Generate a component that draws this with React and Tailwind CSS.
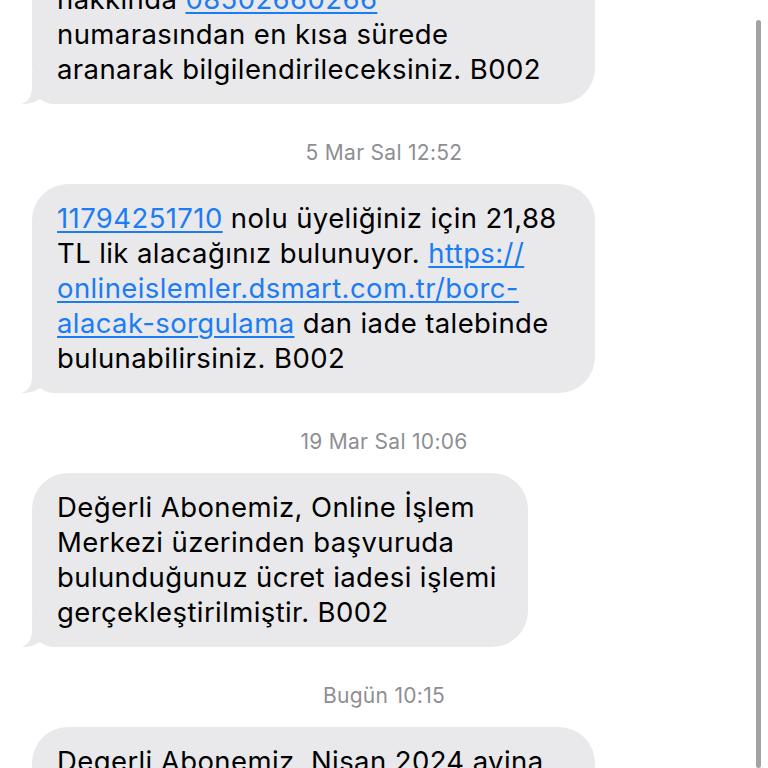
import React from "react";

const Link = ({ children }) => (
  <span className="text-[#1b7cf4] underline decoration-[1.5px] underline-offset-[3px]">{children}</span>
);

const Tail = () => (
  <svg
    className="absolute left-[-10px] bottom-0"
    width="46"
    height="32"
    viewBox="0 0 46 32"
  >
    <path
      d="M10 0 H46 V32 H34 C27 32 22 30 18 27 C14 30 7 32 0 32 C5 30 10 25 10 16 Z"
      fill="#e9e9eb"
    />
  </svg>
);

const Bubble = ({ width, lines }) => (
  <div className={`relative ml-[32px] ${width}`}>
    <Tail />
    <div className="relative rounded-[36px] bg-[#e9e9eb] pl-[25px] py-[17px] text-[27.5px] tracking-[0.4px] leading-[35px] text-black whitespace-nowrap">
      {lines.map((l, i) => (
        <div key={i}>{l}</div>
      ))}
    </div>
  </div>
);

const Stamp = ({ children }) => (
  <div className="mt-[38px] mb-[20px] text-center text-[21px] tracking-[0.3px] leading-[22px] font-normal text-[#8e8e93]">
    {children}
  </div>
);

export default function App() {
  return (
    <div
      className="relative h-[768px] w-[768px] overflow-hidden bg-white"
      style={{ fontFamily: "Inter, 'Noto Sans', sans-serif" }}
    >
      <div className="mt-[-35px] flex flex-col">
        <Bubble
          width="w-[563px]"
          lines={[
            <>hakkında <Link>08502660266</Link></>,
            <>numarasından en kısa sürede</>,
            <>aranarak bilgilendirileceksiniz. B002</>,
          ]}
        />
        <Stamp>5 Mar Sal 12:52</Stamp>
        <Bubble
          width="w-[563px]"
          lines={[
            <><Link>11794251710</Link> nolu üyeliğiniz için 21,88</>,
            <>TL lik alacağınız bulunuyor. <Link>https://</Link></>,
            <><Link>onlineislemler.dsmart.com.tr/borc-</Link></>,
            <><Link>alacak-sorgulama</Link> dan iade talebinde</>,
            <>bulunabilirsiniz. B002</>,
          ]}
        />
        <Stamp>19 Mar Sal 10:06</Stamp>
        <Bubble
          width="w-[496px]"
          lines={[
            <>Değerli Abonemiz, Online İşlem</>,
            <>Merkezi üzerinden başvuruda</>,
            <>bulunduğunuz ücret iadesi işlemi</>,
            <>gerçekleştirilmiştir. B002</>,
          ]}
        />
        <Stamp>Bugün 10:15</Stamp>
        <Bubble
          width="w-[563px]"
          lines={[
            <>Degerli Abonemiz, Nisan 2024 ayina</>,
            <>ait faturaniz olusturulmustur.</>,
          ]}
        />
      </div>
      <div className="absolute left-[756px] top-[20px] bottom-0 w-[5px] rounded-full bg-[#a3a3a3]" />
    </div>
  );
}
